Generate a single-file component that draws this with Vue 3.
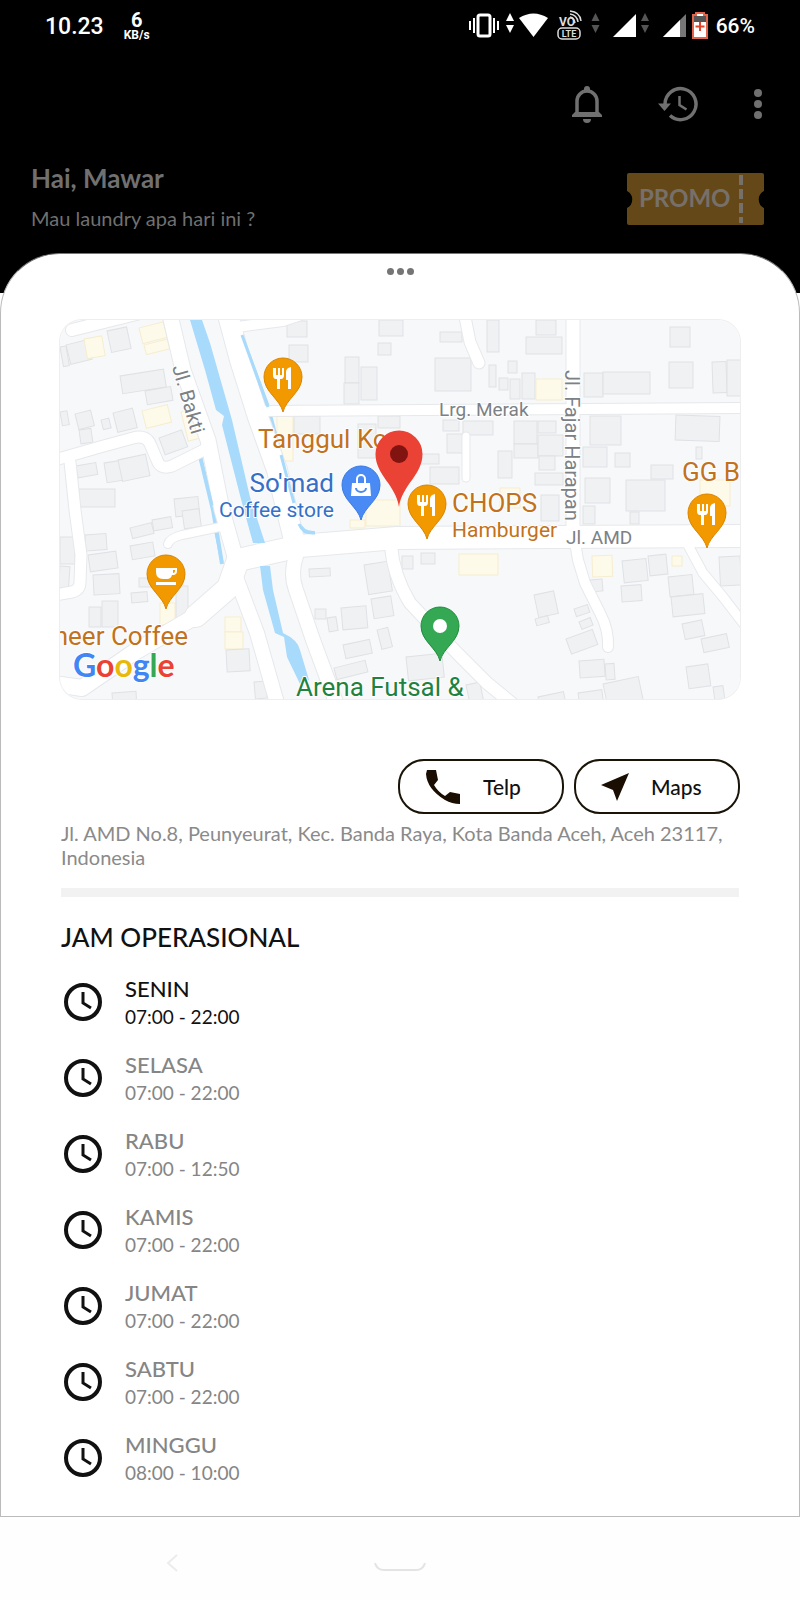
<template>
  <div class="screen">
    <header class="top">
      <div class="status">
        <span class="status-time">10.23</span>
        <span class="status-speed"><b>6</b><small>KB/s</small></span>
        <svg class="status-icons" viewBox="465 8 245 36" width="245" height="36" aria-hidden="true">
          <g fill="#fff">
            <rect x="478" y="15" width="12" height="21" rx="2" fill="none" stroke="#fff" stroke-width="3" />
            <path d="M473 18h2v15h-2zM469 21h2v9h-2zM493 18h2v15h-2zM497 21h2v9h-2z" />
            <path d="M510 13l4 8h-8zM510 33l4-8h-8z" />
            <path d="M519 18q14.500-9 29 0L533.500 37z" />
            <path d="M595.500 13l4 8h-8zM595.500 33l4-8h-8zM645 13l4 8h-8zM645 33l4-8h-8z" fill="#555" />
            <path d="M636 14v23h-23z" />
            <path d="M686 14v23h-23z" fill="#777" />
            <path d="M680 20v17h-17z" />
          </g>
          <text x="559" y="26" class="volte">VO</text>
          <rect x="558" y="28" width="22" height="11" rx="4" fill="none" stroke="#ddd" stroke-width="1.500" />
          <text x="569" y="37" class="volte lte">LTE</text>
          <path d="M570 17q4 1 5 6M570 14q7 1 8 8M570 11q10 1 11 10" fill="none" stroke="#ddd" stroke-width="1.500" />
          <path d="M693 15h3v-2h8v2h3v23h-14z" fill="#fff" stroke="#e0654a" stroke-width="2" />
          <path d="M694 16h12v6h-12z" fill="#555" />
          <path d="M700 22v9M695.500 26.500h9" stroke="#e0452a" stroke-width="2" />
        </svg>
        <span class="status-battery">66%</span>
      </div>

      <div class="toolbar">
        <button type="button" aria-label="Notifikasi">
          <svg viewBox="0 0 32 40" width="32" height="40">
            <path d="M6 31V17a10 10 0 0 1 20 0v14" fill="none" stroke="#707070" stroke-width="3.500" />
            <path d="M1 31l3-3h24l3 3v2H1zM13 7V5a3 3 0 0 1 6 0v2zM12 35h8a4 4 0 0 1-8 0z" fill="#707070" />
          </svg>
        </button>
        <button type="button" aria-label="Riwayat">
          <svg viewBox="0 0 40 40" width="40" height="40">
            <path d="M7 20a15.500 15.500 0 1 1 5 11.500" fill="none" stroke="#707070" stroke-width="3.500" />
            <path d="M0 19.500h13L6.500 27z" fill="#707070" />
            <path d="M21.500 12v9l7 4.500" fill="none" stroke="#707070" stroke-width="2.500" />
          </svg>
        </button>
        <button type="button" aria-label="Menu">
          <svg viewBox="0 0 10 40" width="10" height="40" fill="#707070">
            <circle cx="5" cy="9" r="4" /><circle cx="5" cy="20" r="4" /><circle cx="5" cy="31" r="4" />
          </svg>
        </button>
      </div>

      <div class="welcome">
        <div>
          <h1>Hai, Mawar</h1>
          <p>Mau laundry apa hari ini ?</p>
        </div>
        <button type="button" class="promo">
          <svg viewBox="0 0 137 52" width="137" height="52">
            <path d="M2 0h133q2 0 2 2v16a9.500 9.500 0 0 0 0 17v15q0 2-2 2H2q-2 0-2-2V35a9.500 9.500 0 0 0 0-17V2q0-2 2-2z" fill="#654817" />
            <path d="M114 2v48" stroke="#77706a" stroke-width="4" stroke-dasharray="10 4" />
            <text x="12" y="34">PROMO</text>
          </svg>
        </button>
      </div>
    </header>

    <main class="sheet">
      <div class="grip"><i /><i /><i /></div>

      <svg class="map" viewBox="60 320 680 379" role="img" aria-label="Peta lokasi">
        <rect x="60" y="320" width="680" height="379" fill="#f7f8fa" />
        <g stroke-width="1">
          <rect
            v-for="(b, i) in buildings" :key="i"
            :x="b[0]" :y="b[1]" :width="b[2]" :height="b[3]"
            :transform="`rotate(${b[4] || 0} ${b[0]} ${b[1]})`"
            :fill="b[5] ? '#fefaea' : '#f0f1f3'" :stroke="b[5] ? '#f5edd0' : '#dfe1e4'"
          />
        </g>
        <g fill="none" stroke="#a8dafc">
          <path d="M240 332L268 407L280 453L293 503L298 522Q302 534 315 533" stroke-width="4" />
          <path d="M200 456L213 510L217 533L222 564" stroke-width="4" />
        </g>
        <g fill="none" stroke-linecap="round" stroke-linejoin="round">
          <path v-for="(r, i) in roads" :key="`e${i}`" :d="r.d" :stroke-width="r.w + 2" stroke="#e6e8eb" />
          <path v-for="(r, i) in roads" :key="`r${i}`" :d="r.d" :stroke-width="r.w" stroke="#fff" />
        </g>
        <!-- streams run beside the roads, partly over their verge -->
        <path d="M242 335L268 407M281 455L294 503M299 524Q303 534 315 533M201 460L212 505M216 533L222 562" fill="none" stroke="#a8dafc" stroke-width="3" />
        <path d="M190 320H202L210 343L232 420L250 497L265 543H253L242 503L222 425L224 416L216 410L205 370z" fill="#a8dafc" />
        <path d="M260 566H270L273 590L283 633Q298 640 300 650L309 680L300 684L287 657L284 637L275 633L263 590z" fill="#a8dafc" />

        <g class="street">
          <text x="439" y="416">Lrg. Merak</text>
          <text x="566" y="544">Jl. AMD</text>
          <text transform="translate(565 370) rotate(90)" class="upright">Jl. Fajar Harapan</text>
          <text transform="translate(172 367) rotate(74)" class="upright">Jl. Bakti</text>
        </g>
        <g class="place">
          <text x="258" y="448">Tanggul Ko</text>
          <text x="452" y="512">CHOPS</text>
          <text x="452" y="537" class="kind">Hamburger</text>
          <text x="682" y="481">GG B</text>
          <text x="188" y="645" text-anchor="end">neer Coffee</text>
          <text x="334" y="492" text-anchor="end" class="shop">So'mad</text>
          <text x="334" y="517" text-anchor="end" class="shop kind">Coffee store</text>
          <text x="296" y="696" class="park">Arena Futsal &amp;</text>
        </g>

        <g v-for="p in pins" :key="`${p.x}-${p.y}`" :transform="`translate(${p.x} ${p.y})`">
          <path d="M0 0C-3-13-19-20-19-35A19 19 0 1 1 19-35C19-20 3-13 0 0z" :fill="p.color" :stroke="p.edge" />
          <path v-if="p.icon === 'food'" d="M-10-44v7q0 4 3 4h1v10h3v-10h1q3 0 3-4v-7h-2v7h-2v-7h-2v7h-2v-7zM3-40q0-4 5-5v22H5v-9H3z" fill="#fff" />
          <path v-else-if="p.icon === 'cup'" d="M-10-41H11v3q0 4-4 4H6q-1 4-5 4h-4q-7 0-7-7zM7-39v3q2 0 2-2v-1zM-10-27H10v3h-20z" fill="#fff" fill-rule="evenodd" />
          <g v-else-if="p.icon === 'bag'" fill="none" stroke-width="2">
            <path d="M-9-37H9l1 13h-20z" fill="#fff" />
            <path d="M-4-37v-4a4 4 0 0 1 8 0v4" stroke="#fff" />
            <path d="M-5-32a5 4 0 0 0 10 0" stroke="#4a8af4" />
          </g>
          <circle v-else cy="-35" r="7" fill="#fff" />
        </g>
        <path d="M399 507C396 485 375.500 475 375.500 454A23.500 23.500 0 1 1 422.500 454C422.500 475 402 485 399 507z" fill="#ea4335" />
        <circle cx="399" cy="454" r="9" fill="#811411" />

        <text x="73" y="677" class="google"><tspan fill="#4285f4">G</tspan><tspan fill="#ea4335">o</tspan><tspan fill="#e8b90c">o</tspan><tspan fill="#4285f4">g</tspan><tspan fill="#34a853">l</tspan><tspan fill="#ea4335">e</tspan></text>
      </svg>

      <div class="actions">
        <button type="button">
          <svg viewBox="0 0 36 36" width="36" height="36"><path d="M2 1h9l2 10-4 5q4 7 11 11l5-4 10 2v10q-8 0-15-4Q2 20 1 5z" fill="#1a0d02" /></svg>
          Telp
        </button>
        <button type="button">
          <svg viewBox="0 0 28 36" width="28" height="36"><path d="M28 4L16 32l-4-11L0 16z" fill="#1a0d02" /></svg>
          Maps
        </button>
      </div>

      <p class="address">Jl. AMD No.8, Peunyeurat, Kec. Banda Raya, Kota Banda Aceh, Aceh 23117, Indonesia</p>
      <hr>

      <h2>JAM OPERASIONAL</h2>
      <ul class="hours">
        <li v-for="h in hours" :key="h.day" :class="{ today: h.today }">
          <svg viewBox="0 0 40 40" width="40" height="40" fill="none" stroke="#111">
            <circle cx="20" cy="20" r="17" stroke-width="4" />
            <path d="M20 10v11l8 5" stroke-width="3" />
          </svg>
          <div>
            <strong>{{ h.day }}</strong>
            <span>{{ h.time }}</span>
          </div>
        </li>
      </ul>
    </main>

    <nav class="navbar">
      <button type="button" aria-label="Kembali">
        <svg viewBox="0 0 16 20" width="16" height="20"><path d="M12 2L3 10l9 8" fill="none" stroke="#ececec" stroke-width="2" /></svg>
      </button>
      <button type="button" aria-label="Beranda">
        <svg viewBox="0 0 54 20" width="54" height="20"><path d="M2 10q2 7 9 7h32q7 0 9-7" fill="none" stroke="#e4e4e4" stroke-width="2" /></svg>
      </button>
      <span />
    </nav>
  </div>
</template>

<script setup>
const hours = [
  { day: 'SENIN', time: '07:00 - 22:00', today: true },
  { day: 'SELASA', time: '07:00 - 22:00' },
  { day: 'RABU', time: '07:00 - 12:50' },
  { day: 'KAMIS', time: '07:00 - 22:00' },
  { day: 'JUMAT', time: '07:00 - 22:00' },
  { day: 'SABTU', time: '07:00 - 22:00' },
  { day: 'MINGGU', time: '08:00 - 10:00' },
]

const pins = [
  { x: 283, y: 412, color: '#f29900', edge: '#d98500', icon: 'food' },
  { x: 361, y: 520, color: '#4a8af4', edge: '#3b7ae0', icon: 'bag' },
  { x: 427, y: 539, color: '#f29900', edge: '#d98500', icon: 'food' },
  { x: 707, y: 548, color: '#f29900', edge: '#d98500', icon: 'food' },
  { x: 166, y: 609, color: '#f29900', edge: '#d98500', icon: 'cup' },
  { x: 440, y: 661, color: '#34a853', edge: '#1e8e3e', icon: 'dot' },
]

const roads = [
  { w: 12, d: 'M72 330L160 308' },
  { w: 10, d: 'M237 327L283 321L310 312' },
  { w: 15, d: 'M170 315L183 370L208 440L222 510L236 560' },
  { w: 20, d: 'M228 315L240 360L258 417L277 470L294 540' },
  { w: 10, d: 'M258 411L740 408' },
  { w: 11, d: 'M55 460L100 447L133 438Q147 434 151 446L157 460Q160 470 172 466L204 450' },
  { w: 11, d: 'M70 462L75 510L81 555L80 582Q80 590 72 592L55 595' },
  { w: 8, d: 'M168 544Q170 538 182 535L220 527' },
  { w: 22, d: 'M196 616L228 588L238 560L300 546L397 538L750 536' },
  { w: 16, d: 'M196 616L133 653L82 688L55 684' },
  { w: 14, d: 'M237 580L257 633L279 710' },
  { w: 14, d: 'M296 556Q290 574 296 590L313 640L337 705' },
  { w: 12, d: 'M391 545Q393 575 410 603L457 653L487 683L520 710' },
  { w: 13, d: 'M573 310V536' },
  { w: 10, d: 'M574 536L578 560L585 583L600 613Q609 630 608 647' },
  { w: 9, d: 'M688 545L703 573L723 597L750 632' },
  { w: 11, d: 'M464 312L470 342L479 363' },
  { w: 7, d: 'M466 436V478' },
]

// x, y, width, height, rotation, commercial
const buildings = [
  [66, 345, 22, 20, -14], [84, 339, 18, 20, -10, 1], [107, 331, 20, 22, -12], [139, 328, 25, 16, -14, 1],
  [144, 345, 24, 10, -14, 1], [120, 376, 44, 18, -9], [145, 391, 26, 14, -10], [75, 414, 16, 16, -14],
  [79, 430, 12, 14, -8], [101, 420, 8, 10, -14], [113, 413, 20, 20, -14], [142, 411, 26, 18, -14, 1],
  [159, 438, 24, 18, -20], [181, 412, 12, 30, -14, 1], [76, 466, 20, 12, -10], [104, 463, 20, 20, -9],
  [118, 460, 28, 22, -12], [79, 489, 36, 18, 0], [174, 499, 24, 18, -6], [60, 347, 6, 20, -10], [60, 412, 7, 14, -10],
  [287, 321, 20, 16], [289, 345, 19, 17], [379, 320, 24, 16], [378, 343, 13, 12], [345, 357, 14, 26],
  [361, 367, 16, 33], [344, 383, 15, 21], [277, 416, 16, 45, 0, 1], [294, 416, 26, 18], [378, 416, 22, 12], [358, 424, 18, 34],
  [435, 358, 36, 33], [440, 332, 22, 10], [487, 320, 12, 32], [536, 320, 20, 15], [526, 337, 36, 17],
  [489, 365, 7, 22], [508, 361, 9, 12], [499, 378, 9, 12], [510, 379, 10, 20], [522, 373, 13, 26],
  [536, 379, 26, 21, 0, 1], [584, 373, 19, 24], [603, 372, 47, 22], [670, 327, 20, 20], [669, 362, 24, 26],
  [712, 362, 14, 31, -2], [727, 360, 16, 36], [443, 420, 16, 11], [463, 421, 30, 14], [447, 434, 17, 19],
  [514, 421, 23, 23], [538, 421, 18, 12], [514, 444, 24, 14], [538, 435, 25, 21], [539, 456, 16, 14],
  [498, 451, 14, 27], [430, 467, 29, 17], [420, 454, 19, 10], [535, 473, 28, 12], [541, 495, 18, 26],
  [590, 416, 31, 29], [583, 447, 24, 20], [615, 453, 15, 14], [585, 478, 25, 25], [626, 480, 39, 31],
  [651, 465, 22, 14], [676, 415, 44, 25, 2], [696, 447, 6, 12], [583, 506, 12, 18], [630, 512, 9, 12],
  [700, 480, 30, 26, 0, 1], [366, 500, 34, 26, 0, 1], [350, 520, 15, 8, 0, 1], [500, 488, 20, 20, 0, 1],
  [60, 537, 15, 27], [60, 566, 10, 22, 4], [85, 535, 21, 16, -4], [88, 555, 28, 17, -8], [93, 575, 26, 20, -3],
  [89, 607, 12, 20], [102, 601, 16, 26], [130, 528, 22, 11, -14], [152, 520, 19, 11, -10], [182, 511, 17, 18, -8],
  [130, 546, 23, 14, -10], [139, 578, 14, 9], [131, 593, 16, 10, -5], [160, 603, 15, 22, 0, 1], [176, 586, 12, 32],
  [225, 617, 16, 15, 0, 1], [225, 632, 18, 17, 0, 1], [226, 650, 23, 22, -3], [254, 682, 12, 17, -5], [112, 693, 24, 8, -4],
  [309, 569, 21, 8, -3], [364, 565, 24, 30, -9], [371, 599, 20, 20, -9], [341, 608, 25, 22, -5], [315, 609, 11, 10],
  [327, 618, 9, 14, -9], [377, 630, 11, 20, -14], [343, 645, 27, 14, -12], [334, 668, 32, 12, -14],
  [402, 556, 11, 13], [421, 553, 14, 11], [459, 554, 39, 21, 0, 1], [534, 595, 20, 23, -12], [535, 619, 13, 7, -15],
  [406, 657, 36, 24, -6], [466, 685, 14, 18, -12], [538, 697, 26, 10, -12],
  [592, 556, 20, 21, -2, 1], [590, 580, 12, 12, -5], [622, 561, 24, 22, -6], [621, 586, 20, 16, -4],
  [648, 556, 18, 20, -6], [672, 556, 10, 10, 0, 1], [668, 577, 24, 20, -6], [671, 597, 32, 20, -6],
  [719, 557, 21, 29, -3], [682, 624, 20, 16, -12], [701, 639, 26, 14, -12], [686, 667, 22, 22, -8], [713, 687, 10, 13, -8],
  [574, 609, 14, 8, -18], [579, 622, 12, 8, -22], [566, 639, 28, 16, -20], [579, 661, 25, 17, -4],
  [605, 664, 9, 16, -4], [603, 684, 36, 24, -12], [578, 693, 24, 10, -8],
]
</script>

<style>
body {
  margin: 0;
  background: #fff;
}
</style>

<style scoped>
.screen {
  font-family: Lato, "Open Sans", sans-serif;
  color: #111;
  background: #fefefe;
}

button {
  padding: 0;
  border: 0;
  background: none;
  font: inherit;
  color: inherit;
  cursor: pointer;
}

svg {
  display: block;
}

h1, h2, p, ul {
  margin: 0;
  padding: 0;
}

.top {
  height: 293px;
  margin-bottom: -40px;
  background: #000;
  color: #707070;
}

.status {
  display: flex;
  align-items: center;
  height: 52px;
  padding: 0 45px;
  font-family: Roboto, sans-serif;
  color: #fff;
}

.status-time {
  font-size: 23px;
  font-weight: 500;
}

.status-speed {
  display: flex;
  flex-direction: column;
  align-items: center;
  margin-left: 20px;
}

.status-speed b {
  font-size: 20px;
  font-weight: 700;
  line-height: 18px;
}

.status-speed small {
  font-size: 12px;
  font-weight: 700;
  line-height: 12px;
}

.status-icons {
  margin-left: auto;
}

.status-battery {
  margin-left: 6px;
  font-size: 21px;
  font-weight: 500;
}

.volte {
  fill: #ddd;
  font-size: 12px;
  font-weight: 700;
}

.lte {
  font-size: 9px;
  text-anchor: middle;
}

.toolbar {
  display: flex;
  justify-content: flex-end;
  align-items: center;
  height: 104px;
  padding: 0 37px;
  gap: 55px;
}

.welcome {
  display: flex;
  justify-content: space-between;
  padding: 0 36px 0 31px;
}

.welcome h1 {
  font-size: 26px;
  line-height: 44px;
  font-weight: 700;
}

.welcome p {
  font-size: 20px;
  line-height: 36px;
}

.promo {
  margin-top: 17px;
  align-self: flex-start;
}

.promo text {
  fill: #77706a;
  font-size: 24px;
  font-weight: 700;
}

.sheet {
  position: relative;
  padding: 0 59px 20px;
  border: 1px solid #bbb;
  border-top-color: #777;
  border-radius: 60px 60px 0 0;
  background: #fff;
}

.grip {
  display: flex;
  justify-content: center;
  gap: 3px;
  padding: 14px 0 45px;
}

.grip i {
  width: 7px;
  height: 7px;
  border-radius: 50%;
  background: #757575;
}

.map {
  width: 100%;
  border-radius: 22px;
  box-shadow: 0 0 0 1px #eee;
  font-family: Roboto, sans-serif;
}

.map text {
  stroke: #fff;
  stroke-width: 2px;
  stroke-linejoin: round;
  paint-order: stroke;
}

.street {
  fill: #7c8186;
  font-size: 19px;
}

.upright {
  font-size: 20px;
}

.place {
  fill: #c2711c;
  font-size: 26px;
}

.kind {
  font-size: 21px;
}

.shop {
  fill: #3470c8;
}

.park {
  fill: #1f8240;
}

.map .google {
  font-family: Lato, sans-serif;
  font-size: 32px;
  font-weight: 700;
}

.actions {
  display: flex;
  justify-content: flex-end;
  gap: 10px;
  margin-top: 60px;
}

.actions button {
  display: flex;
  align-items: center;
  gap: 22px;
  width: 166px;
  height: 55px;
  padding-left: 25px;
  border: 2px solid #1a1408;
  border-radius: 26px;
  font-size: 21px;
  font-weight: 500;
}

.address {
  margin-top: 7px;
  padding: 0 1px;
  color: #8a8a8a;
  font-size: 20px;
  line-height: 24px;
}

hr {
  height: 9px;
  margin: 19px 1px 0;
  border: 0;
  background: #f2f2f2;
}

h2 {
  margin-top: 24px;
  padding-left: 1px;
  font-size: 26px;
  line-height: 32px;
  font-weight: 500;
}

.hours {
  margin-top: 11px;
  list-style: none;
}

.hours li {
  display: flex;
  align-items: center;
  gap: 22px;
  height: 76px;
  padding-left: 3px;
  color: #858585;
}

.hours .today {
  color: #111;
}

.hours strong,
.hours span {
  display: block;
}

.hours strong {
  font-size: 22px;
  line-height: 29px;
  font-weight: 500;
}

.hours span {
  font-size: 19px;
  line-height: 28px;
}

.navbar {
  display: grid;
  grid-template-columns: repeat(3, 1fr);
  justify-items: center;
  align-items: center;
  box-sizing: border-box;
  height: 84px;
  padding: 8px 60px 0;
}
</style>
